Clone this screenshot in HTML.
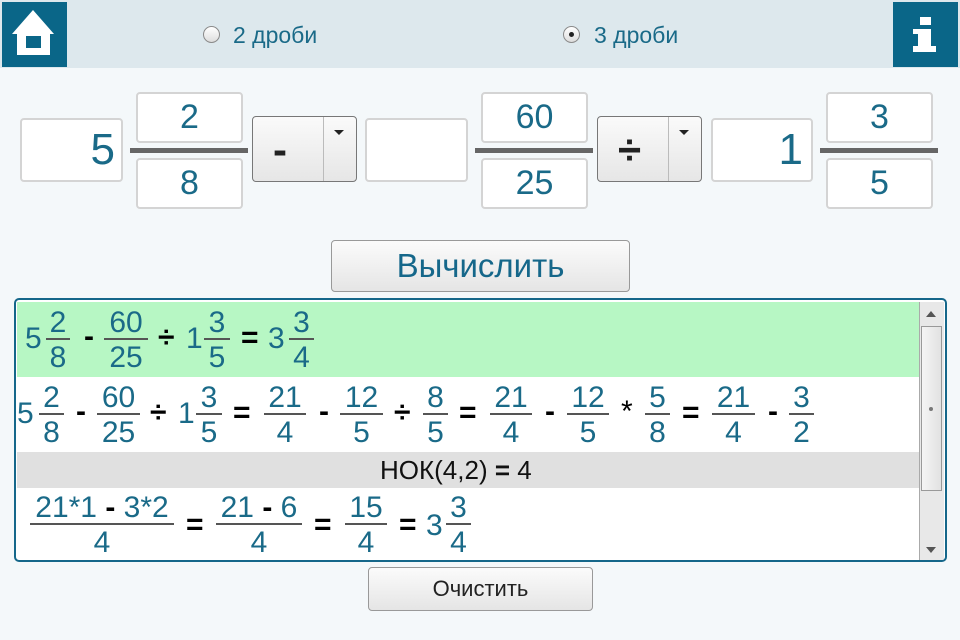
<!DOCTYPE html>
<html><head><meta charset="utf-8"><style>
*{margin:0;padding:0;box-sizing:border-box}
body{width:960px;height:640px;background:#f4f8fa;font-family:"Liberation Sans",sans-serif;position:relative;overflow:hidden}
.a{position:absolute}
.hdr{left:0;top:0;width:960px;height:68px;background:#dde8ed}
.tb{position:absolute;background:#0a6688}
.radio{position:absolute;width:17px;height:17px;border-radius:50%;border:1px solid #8a8a8a;background:linear-gradient(#fff,#ddd)}
.rt{position:absolute;font-size:23px;color:#1a6a88;line-height:24px}
.box{position:absolute;background:#fff;border:2px solid #d4d4d4;border-radius:4px;color:#1a6a88;font-size:44px;text-align:center}
.bar{position:absolute;height:5px;background:#666}
.sel{position:absolute;border:1px solid #777;border-radius:4px;background:linear-gradient(#fafafa,#e6e6e6);font-size:42px;font-weight:bold;color:#222}
.btn{position:absolute;border:1px solid #999;border-radius:4px;background:linear-gradient(#fbfbfb,#e5e5e5);text-align:center}
.res{left:14px;top:298px;width:933px;height:264px;border:2px solid #15678a;border-radius:5px;background:#fff;overflow:hidden}
.t{position:absolute;font-size:30px;line-height:30px;color:#1a6a88;white-space:nowrap}
.o{position:absolute;font-size:30px;line-height:30px;color:#000;font-weight:bold}
.f{position:absolute;text-align:center;font-size:30px;line-height:31px;color:#1a6a88;white-space:nowrap}
.f i{display:block;height:2px;background:#555}
.f b{display:block;font-weight:normal}
.f b+i+b{padding-top:2px}
.f b.x{font-weight:bold;color:#000;display:inline}
</style></head><body>
<div class="a hdr"></div>
<div class="tb" style="left:2px;top:2px;width:65px;height:65px">
<svg width="65" height="65"><polygon points="31,8 10,32 52,32" fill="#fff"/><rect x="15" y="31" width="33" height="22" fill="#fff"/><rect x="24" y="34" width="15" height="12" fill="#0a6688"/></svg></div>
<div class="tb" style="left:893px;top:2px;width:65px;height:65px">
<svg width="65" height="65"><rect x="27" y="15" width="11" height="8" fill="#fff"/><polygon points="20,27 38,27 38,44 43,44 43,50 20,50 20,44 25,44 25,32 20,32" fill="#fff"/></svg></div>
<div class="radio" style="left:203px;top:26px"></div>
<div class="rt" style="left:233px;top:23px">2 дроби</div>
<div class="radio" style="left:563px;top:26px"><div style="position:absolute;left:5px;top:5px;width:5px;height:5px;border-radius:50%;background:#222"></div></div>
<div class="rt" style="left:594px;top:23px">3 дроби</div>

<div class="box" style="left:20px;top:118px;width:103px;height:64px;text-align:right;padding-right:6px;line-height:60px">5</div>
<div class="box" style="left:136px;top:92px;width:107px;height:51px;font-size:34px;line-height:47px">2</div>
<div class="bar" style="left:130px;top:148px;width:118px"></div>
<div class="box" style="left:136px;top:158px;width:107px;height:51px;font-size:34px;line-height:47px">8</div>
<div class="sel" style="left:252px;top:116px;width:105px;height:66px"><span class="a" style="left:20px;top:9px">-</span><div class="a" style="left:70px;top:0;width:1px;height:64px;background:#bbb"></div><div class="a" style="left:81px;top:13px;border:5px solid transparent;border-top:5px solid #222;border-bottom:0"></div></div>
<div class="box" style="left:365px;top:118px;width:103px;height:64px"></div>
<div class="box" style="left:481px;top:92px;width:107px;height:51px;font-size:34px;line-height:47px">60</div>
<div class="bar" style="left:475px;top:148px;width:118px"></div>
<div class="box" style="left:481px;top:158px;width:107px;height:51px;font-size:34px;line-height:47px">25</div>
<div class="sel" style="left:597px;top:116px;width:105px;height:66px"><span class="a" style="left:20px;top:9px">÷</span><div class="a" style="left:70px;top:0;width:1px;height:64px;background:#bbb"></div><div class="a" style="left:81px;top:13px;border:5px solid transparent;border-top:5px solid #222;border-bottom:0"></div></div>
<div class="box" style="left:711px;top:118px;width:102px;height:64px;text-align:right;padding-right:8px;line-height:60px">1</div>
<div class="box" style="left:826px;top:92px;width:107px;height:51px;font-size:34px;line-height:47px">3</div>
<div class="bar" style="left:820px;top:148px;width:118px"></div>
<div class="box" style="left:826px;top:158px;width:107px;height:51px;font-size:34px;line-height:47px">5</div>

<div class="btn" style="left:331px;top:240px;width:299px;height:52px;font-size:33px;color:#15678a;line-height:50px">Вычислить</div>

<div class="a res">
<div class="a" style="left:1px;top:2px;width:903px;height:75px;background:#b7f7c4"></div>
<div class="a" style="left:1px;top:152px;width:903px;height:36px;background:#e0e0e0"></div>
<div class="a" style="left:903px;top:2px;width:25px;height:258px;background:#e8e8e8;border-left:1px solid #aaa"></div>
<div class="a" style="left:905px;top:26px;width:21px;height:165px;background:linear-gradient(90deg,#f4f4f4,#e2e2e2);border:1px solid #999"></div>
<div class="a" style="left:913px;top:107px;width:4px;height:4px;border-radius:50%;background:#777"></div>
<div class="a" style="left:910px;top:11px;border:5px solid transparent;border-bottom:6px solid #555;border-top:0"></div>
<div class="a" style="left:910px;top:247px;border:5px solid transparent;border-top:6px solid #555;border-bottom:0"></div>
</div>
<div class="a" style="left:16px;top:300px;width:900px;height:260px">
<!-- row1 center 38 -->
<div class="t" style="left:9px;top:24px">5</div>
<div class="f" style="left:30px;top:7px;width:24px"><b>2</b><i></i><b>8</b></div>
<div class="o" style="left:68px;top:22px">-</div>
<div class="f" style="left:88px;top:7px;width:44px"><b>60</b><i></i><b>25</b></div>
<div class="o" style="left:142px;top:23px">÷</div>
<div class="t" style="left:170px;top:24px">1</div>
<div class="f" style="left:188px;top:7px;width:26px"><b>3</b><i></i><b>5</b></div>
<div class="o" style="left:225px;top:23px">=</div>
<div class="t" style="left:252px;top:24px">3</div>
<div class="f" style="left:273px;top:7px;width:25px"><b>3</b><i></i><b>4</b></div>
<!-- row2 center 113 -->
<div class="t" style="left:1px;top:99px">5</div>
<div class="f" style="left:23px;top:82px;width:25px"><b>2</b><i></i><b>8</b></div>
<div class="o" style="left:60px;top:97px">-</div>
<div class="f" style="left:81px;top:82px;width:43px"><b>60</b><i></i><b>25</b></div>
<div class="o" style="left:134px;top:98px">÷</div>
<div class="t" style="left:162px;top:99px">1</div>
<div class="f" style="left:180px;top:82px;width:26px"><b>3</b><i></i><b>5</b></div>
<div class="o" style="left:217px;top:98px">=</div>
<div class="f" style="left:248px;top:82px;width:42px"><b>21</b><i></i><b>4</b></div>
<div class="o" style="left:303px;top:97px">-</div>
<div class="f" style="left:324px;top:82px;width:43px"><b>12</b><i></i><b>5</b></div>
<div class="o" style="left:378px;top:98px">÷</div>
<div class="f" style="left:407px;top:82px;width:25px"><b>8</b><i></i><b>5</b></div>
<div class="o" style="left:443px;top:98px">=</div>
<div class="f" style="left:474px;top:82px;width:42px"><b>21</b><i></i><b>4</b></div>
<div class="o" style="left:529px;top:97px">-</div>
<div class="f" style="left:551px;top:82px;width:42px"><b>12</b><i></i><b>5</b></div>
<div class="o" style="left:605px;top:97px;font-weight:normal">*</div>
<div class="f" style="left:629px;top:82px;width:25px"><b>5</b><i></i><b>8</b></div>
<div class="o" style="left:666px;top:98px">=</div>
<div class="f" style="left:696px;top:82px;width:43px"><b>21</b><i></i><b>4</b></div>
<div class="o" style="left:752px;top:97px">-</div>
<div class="f" style="left:773px;top:82px;width:25px"><b>3</b><i></i><b>2</b></div>
<!-- row3 -->
<div class="t" style="left:364px;top:155px;color:#111;font-size:26px">НОК(4,2) <b style="font-weight:bold">=</b> 4</div>
<!-- row4 center 225 -->
<div class="f" style="left:14px;top:192px;width:144px"><b>21*1 <b class="x">-</b> 3*2</b><i></i><b>4</b></div>
<div class="o" style="left:170px;top:210px">=</div>
<div class="f" style="left:200px;top:192px;width:86px"><b>21 <b class="x">-</b> 6</b><i></i><b>4</b></div>
<div class="o" style="left:298px;top:210px">=</div>
<div class="f" style="left:329px;top:192px;width:42px"><b>15</b><i></i><b>4</b></div>
<div class="o" style="left:383px;top:210px">=</div>
<div class="t" style="left:410px;top:211px">3</div>
<div class="f" style="left:430px;top:192px;width:25px"><b>3</b><i></i><b>4</b></div>
</div>

<div class="btn" style="left:368px;top:567px;width:225px;height:44px;font-size:22px;color:#222;line-height:42px">Очистить</div>
</body></html>
